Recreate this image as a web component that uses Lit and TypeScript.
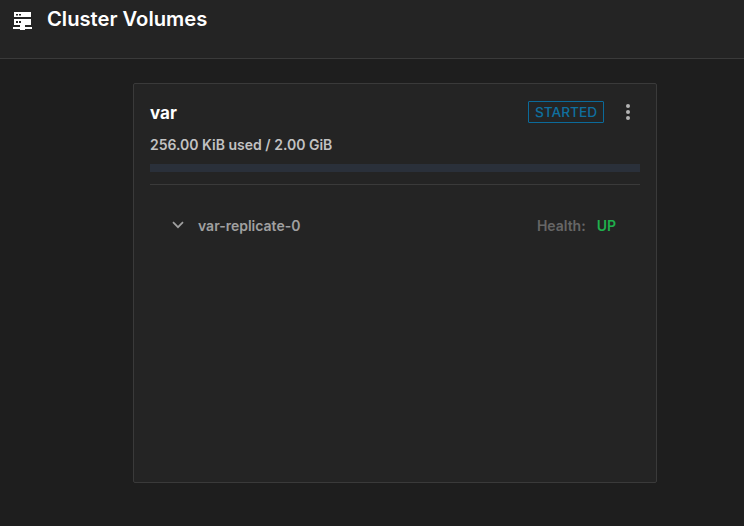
import { LitElement, html, css } from "lit";
import { customElement } from "lit/decorators.js";

@customElement("app-root")
export class AppRoot extends LitElement {
  static styles = css`
    :host {
      display: block;
      width: 744px;
      height: 526px;
      background: #1e1e1e;
      font-family: Inter, "Open Sans", sans-serif;
      overflow: hidden;
    }
    .header {
      height: 59px;
      box-sizing: border-box;
      background: #242424;
      border-bottom: 1px solid #3a3a3a;
      display: flex;
      align-items: flex-start;
      padding: 8px 0 0 12px;
      gap: 14px;
    }
    .header svg { width: 21px; height: 21px; margin-top: 2px; flex: none; }
    .title {
      font-size: 20.2px;
      font-weight: 600;
      line-height: 22px;
      color: #fff;
    }
    .main {
      padding: 24px 87px 0 133px;
    }
    .card {
      height: 400px;
      box-sizing: border-box;
      background: #242424;
      border: 1px solid #3a3a3a;
      border-radius: 2px;
      padding: 15px 16px 0;
    }
    .top {
      display: flex;
      align-items: center;
      height: 26px;
    }
    .name {
      flex: 1;
      font-size: 17px;
      font-weight: 700;
      line-height: 22px;
      padding-top: 2px;
      color: #fff;
    }
    .badge {
      box-sizing: border-box;
      height: 22px;
      width: 76px;
      border: 1px solid #0b6a9a;
      border-radius: 1px;
      color: #0f6f9e;
      font-size: 13.7px;
      font-weight: 500;
      display: flex;
      align-items: center;
      justify-content: center;
    }
    .menu { width: 4px; margin: 0 10px 0 22px; display: flex; flex-direction: column; gap: 2px; }
    .menu i { width: 4px; height: 4px; border-radius: 50%; background: #b4b4b4; display: block; }
    .usage {
      margin-top: 11px;
      font-size: 14px;
      font-weight: 600;
      line-height: 18px;
      color: #c2c2c2;
    }
    .bar {
      margin-top: 10px;
      height: 8px;
      background: #2a303a;
    }
    .rule {
      margin-top: 12px;
      height: 1px;
      background: #3a3a3a;
    }
    .row {
      display: flex;
      align-items: center;
      margin-top: 29px;
      padding: 0 24px 0 22px;
      height: 22px;
    }
    .row svg { width: 12px; height: 8px; flex: none; margin-right: 14px; }
    .rep { flex: 1; font-size: 14px; font-weight: 600; color: #a0a0a0; }
    .hl { font-size: 14px; font-weight: 600; color: #666; margin-right: 11px; }
    .up { font-size: 14px; font-weight: 600; color: #1fb04c; }
  `;

  render() {
    return html`
      <div class="header">
        <svg viewBox="0 0 21 21" fill="#fff">
          <path fill-rule="evenodd" d="M2 2h17v5H2zM4 4v1.5h2V4zm3 0v1.5h2V4zM2 9h17v6H2zM4 11v2h2v-2zm3 0v2h2v-2z" />
          <rect x="1" y="17" width="19" height="2" />
          <rect x="8" y="15" width="5" height="5" />
        </svg>
        <div class="title">Cluster Volumes</div>
      </div>
      <div class="main">
        <div class="card">
          <div class="top">
            <div class="name">var</div>
            <div class="badge">STARTED</div>
            <div class="menu"><i></i><i></i><i></i></div>
          </div>
          <div class="usage">256.00 KiB used / 2.00 GiB</div>
          <div class="bar"></div>
          <div class="rule"></div>
          <div class="row">
            <svg viewBox="0 0 12 8" fill="none" stroke="#a0a0a0" stroke-width="1.7"><path d="M1 1.2l5 5 5-5" /></svg>
            <div class="rep">var-replicate-0</div>
            <div class="hl">Health:</div>
            <div class="up">UP</div>
          </div>
        </div>
      </div>
    `;
  }
}
